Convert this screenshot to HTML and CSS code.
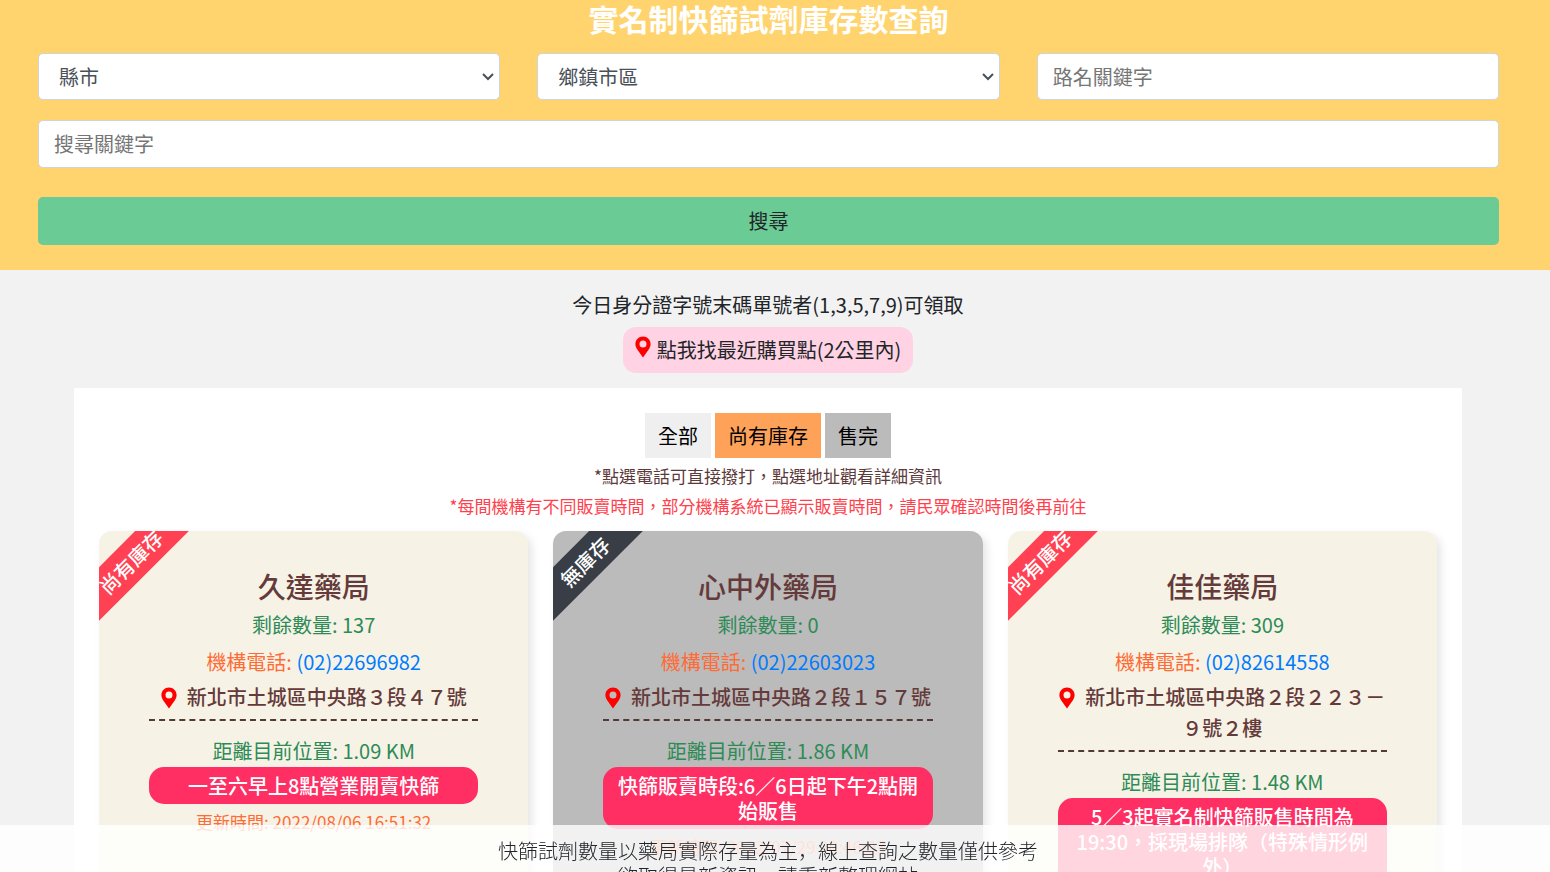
FILE: index.html
```html
<!DOCTYPE html>
<html lang="zh-Hant">
<head>
<meta charset="utf-8">
<meta name="viewport" content="width=device-width, initial-scale=1">
<title>實名制快篩試劑庫存數查詢</title>
<link rel="stylesheet" href="styles.css">
</head>
<body>
<svg class="symbols" aria-hidden="true">
  <symbol id="pin" viewBox="0 0 16 22">
    <path fill="#f00" fill-rule="evenodd" d="M8 .5C3.800.5.400 3.800.4 8c0 2.100.8 3.600 1.700 5.200L8 21.500l5.900-8.300c.9-1.600 1.700-3.100 1.700-5.200C15.600 3.800 12.200.5 8 .5zm0 4.100a3.500 3.500 0 1 1 0 7 3.500 3.500 0 0 1 0-7z"/>
  </symbol>
</svg>
<header class="search">
  <h1 class="search-title">實名制快篩試劑庫存數查詢</h1>
  <form class="search-form">
    <select class="field field-select" aria-label="縣市"><option>縣市</option></select>
    <select class="field field-select" aria-label="鄉鎮市區"><option>鄉鎮市區</option></select>
    <input class="field" type="text" placeholder="路名關鍵字" aria-label="路名關鍵字">
    <input class="field field-wide" type="text" placeholder="搜尋關鍵字" aria-label="搜尋關鍵字">
    <button class="search-button" type="button">搜尋</button>
  </form>
</header>
<main class="main">
  <section class="intro">
    <p class="intro-text">今日身分證字號末碼單號者(1,3,5,7,9)可領取</p>
    <button class="nearby" type="button"><svg class="pin"><use href="#pin"/></svg>點我找最近購買點(2公里內)</button>
  </section>
  <section class="panel">
    <div class="filters">
      <button class="filter" type="button">全部</button>
      <button class="filter filter-stock" type="button">尚有庫存</button>
      <button class="filter filter-sold" type="button">售完</button>
    </div>
    <p class="note">*點選電話可直接撥打，點選地址觀看詳細資訊</p>
    <p class="note note-alert">*每間機構有不同販賣時間，部分機構系統已顯示販賣時間，請民眾確認時間後再前往</p>
    <div class="cards">
      <article class="card">
        <span class="ribbon">尚有庫存</span>
        <h2 class="name">久達藥局</h2>
        <p class="stock">剩餘數量: 137</p>
        <p class="phone">機構電話: <a class="tel" href="tel:0222696982">(02)22696982</a></p>
        <a class="address" href="#map"><svg class="pin"><use href="#pin"/></svg>新北市土城區中央路３段４７號</a>
        <p class="distance">距離目前位置: 1.09 KM</p>
        <p class="hours">一至六早上8點營業開賣快篩</p>
        <p class="updated">更新時間: 2022/08/06 16:51:32</p>
      </article>
      <article class="card card-sold">
        <span class="ribbon ribbon-sold">無庫存</span>
        <h2 class="name">心中外藥局</h2>
        <p class="stock">剩餘數量: 0</p>
        <p class="phone">機構電話: <a class="tel" href="tel:0222603023">(02)22603023</a></p>
        <a class="address" href="#map"><svg class="pin"><use href="#pin"/></svg>新北市土城區中央路２段１５７號</a>
        <p class="distance">距離目前位置: 1.86 KM</p>
        <p class="hours">快篩販賣時段:6／6日起下午2點開始販售</p>
        <p class="updated">更新時間: 2022/07/29 20:46:03</p>
      </article>
      <article class="card">
        <span class="ribbon">尚有庫存</span>
        <h2 class="name">佳佳藥局</h2>
        <p class="stock">剩餘數量: 309</p>
        <p class="phone">機構電話: <a class="tel" href="tel:0282614558">(02)82614558</a></p>
        <a class="address" href="#map"><svg class="pin"><use href="#pin"/></svg>新北市土城區中央路２段２２３－９號２樓</a>
        <p class="distance">距離目前位置: 1.48 KM</p>
        <p class="hours">5／3起實名制快篩販售時間為19:30，採現場排隊（特殊情形例外）</p>
      </article>
    </div>
  </section>
</main>
<footer class="notice">
  <p class="notice-line">快篩試劑數量以藥局實際存量為主，線上查詢之數量僅供參考</p>
  <p class="notice-line">欲取得最新資訊，請重新整理網站</p>
</footer>
</body>
</html>
```
FILE: styles.css
```css
* { box-sizing: border-box; }

body {
  margin: 0;
  background: #f2f2f2;
  color: #212529;
  font-family: "Noto Sans CJK TC", sans-serif;
  font-size: 20px;
  line-height: 30px;
}

h1, h2, p { margin: 0; }

button, input, select { font: inherit; }

.symbols { position: absolute; width: 0; height: 0; }

.search {
  padding: 0 51px 25px 38px;
  background: #ffd46e;
}

.search-title {
  padding-bottom: 17px;
  color: #fff;
  font-size: 30px;
  font-weight: 700;
  line-height: 36px;
  text-align: center;
}

.search-form {
  display: grid;
  grid-template-columns: repeat(3, 1fr);
  column-gap: 37px;
  row-gap: 20px;
}

.field {
  width: 100%;
  min-width: 0;
  height: 47px;
  padding: 7px 15px;
  border: 1px solid #ced4da;
  border-radius: 5px;
  background: #fff;
  color: #495057;
}

.field::placeholder { color: #757575; }

.field-select {
  padding: 7px 20px;
  appearance: none;
  background: #fff url("data:image/svg+xml,%3Csvg xmlns='http://www.w3.org/2000/svg' width='12' height='8' viewBox='0 0 12 8'%3E%3Cpath d='M1 1l5 5 5-5' fill='none' stroke='%23495057' stroke-width='2'/%3E%3C/svg%3E") no-repeat right 5px center;
}

.field-wide {
  grid-column: 1 / -1;
  height: 48px;
  padding: 6px 15px 8px;
}

.search-button {
  grid-column: 1 / -1;
  height: 48px;
  margin-top: 9px;
  border: 0;
  border-radius: 5px;
  background: #6bcb95;
  color: #212529;
}

.main {
  padding: 20px 88px 25px 74px;
  text-align: center;
}

.intro { padding-bottom: 15px; }

.intro-text { margin-bottom: 7px; }

.nearby {
  height: 46px;
  padding: 8px 12px;
  border: 0;
  border-radius: 13px;
  background: #ffd3e3;
  color: #212529;
  line-height: 30px;
}

.pin { width: 16px; height: 22px; }

.nearby .pin { margin-right: 6px; vertical-align: 0; }

.panel {
  padding: 25px;
  background: #fff;
}

.filters {
  display: flex;
  justify-content: center;
  gap: 4px;
  margin-bottom: 3px;
}

.filter {
  height: 45px;
  padding: 7px 13px;
  border: 0;
  background: #efefef;
  color: #000;
}

.filter-stock { background: #ffa259; }

.filter-sold { background: #bbb; }

.note {
  color: #5d3a3a;
  font-size: 17px;
}

.note-alert { color: #ff414d; }

.cards {
  display: grid;
  grid-template-columns: repeat(3, 1fr);
  gap: 25px;
  margin-top: 10px;
}

.card {
  position: relative;
  overflow: hidden;
  padding: 36px 50px;
  border-radius: 13px;
  background: #f6f3e6;
  box-shadow: 4px 4px 8px #e6e6e6;
}

.card-sold { background: #bbb; }

.ribbon {
  position: absolute;
  top: 12px;
  left: -48px;
  width: 160px;
  background: #ff4153;
  color: #fff;
  font-weight: 500;
  line-height: 38px;
  transform: rotate(-45deg);
}

.ribbon-sold { background: #393e46; }

.name {
  color: #653a3a;
  font-size: 28px;
  font-weight: 500;
  line-height: 38px;
}

.stock, .distance { color: #2e8b57; }

.stock { margin: 5px 0 7px; }

.phone { color: #ff6b35; }

.tel { color: #007bff; text-decoration: none; }

.address {
  display: block;
  margin-top: 4px;
  padding-bottom: 7px;
  border-bottom: 2px dashed #533a35;
  color: #653a3a;
  font-weight: 500;
  line-height: 31px;
  text-decoration: none;
}

.address .pin { margin-right: 10px; vertical-align: -4px; }

.distance { margin-top: 15px; }

.hours {
  margin-top: 1px;
  padding: 6px 13px;
  border-radius: 15px;
  background: #ff2e63;
  color: #fff;
  font-weight: 500;
  line-height: 25px;
}

.updated {
  margin-top: 3px;
  color: #ff6b35;
  font-size: 17px;
}

.notice {
  position: fixed;
  right: 0;
  bottom: 0;
  left: 0;
  height: 47px;
  padding: 13px 14px 0 0;
  overflow: hidden;
  background: rgba(255, 255, 255, 0.8);
  color: #212529;
  font-family: "Noto Sans CJK JP", sans-serif;
  font-feature-settings: "locl" 0;
  font-weight: 300;
  text-align: center;
}

.notice-line { line-height: 25px; }
```
